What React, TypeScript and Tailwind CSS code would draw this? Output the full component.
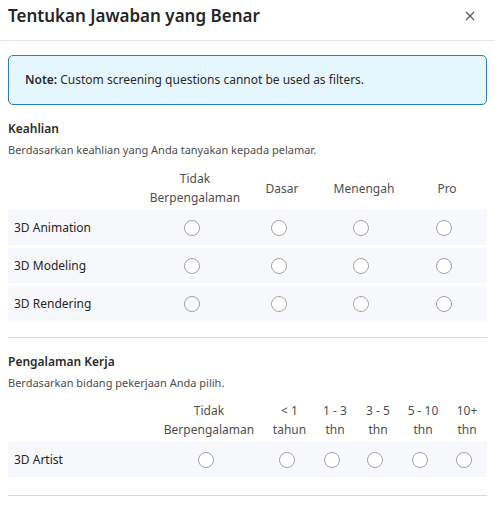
import React from "react";

const font = { fontFamily: '"Noto Sans", "Open Sans", sans-serif' };

function Radio() {
  return <span className="block w-4 h-4 rounded-full border border-[#a3a3a3] bg-white mr-[6px]" />;
}

function Section({
  title,
  subtitle,
  cols,
  template,
  rows,
  headerMt,
  pb,
}: {
  title: string;
  subtitle: string;
  cols: string[][];
  template: string;
  rows: string[];
  headerMt: string;
  pb: string;
}) {
  return (
    <div className={`border-b border-[#d9d9d9] mt-4 ${pb}`}>
      <div className="text-[12px] leading-4 font-semibold text-[#2b2b2b]">{title}</div>
      <div className="mt-[5px] text-[11px] leading-[15px] text-[#4d4d4d]">{subtitle}</div>
      <div className={`grid ${template} ${headerMt}`}>
        <div />
        {cols.map((c, i) => (
          <div
            key={i}
            className="flex flex-col items-center justify-center text-center text-[12px] leading-[19px] text-[#4f4f4f] h-[38px]"
          >
            {c.map((l, j) => (
              <span key={j} className="whitespace-nowrap">{l}</span>
            ))}
          </div>
        ))}
      </div>
      <div className="flex flex-col gap-[3px] mt-[3px]">
        {rows.map((r) => (
          <div key={r} className={`grid ${template} h-[35px] bg-[#f7f8fc] items-center`}>
            <div className="pl-[6px] text-[12px] text-[#262626]">{r}</div>
            {cols.map((_, i) => (
              <div key={i} className="flex justify-center">
                <Radio />
              </div>
            ))}
          </div>
        ))}
      </div>
    </div>
  );
}

export default function App() {
  return (
    <div className="w-[495px] h-[511px] bg-white overflow-hidden" style={font}>
      <div className="h-[41px] border-b border-[#e9e9e9] px-2 pt-[4px] flex justify-between">
        <div className="text-[17px] leading-[23px] font-semibold text-[#262626]">Tentukan Jawaban yang Benar</div>
        <svg width="10" height="10" viewBox="0 0 10 10" className="mt-[7px] mr-[12px]">
          <path d="M1 1L9 9M9 1L1 9" stroke="#595959" strokeWidth="1.3" />
        </svg>
      </div>
      <div className="px-2">
        <div className="mt-[14px] rounded-[5px] border border-[#2b7db8] bg-[#e6f6fd] px-4 py-4 text-[12px] leading-4 text-[#2b2b2b]">
          <span className="font-semibold">Note:</span> Custom screening questions cannot be used as filters.
        </div>
        <Section
          title="Keahlian"
          subtitle="Berdasarkan keahlian yang Anda tanyakan kepada pelamar."
          cols={[["Tidak", "Berpengalaman"], ["Dasar"], ["Menengah"], ["Pro"]]}
          template="grid-cols-[140px_94px_80px_84px_82px]"
          rows={["3D Animation", "3D Modeling", "3D Rendering"]}
          headerMt="mt-[12px]"
          pb="pb-4"
        />
        <Section
          title="Pengalaman Kerja"
          subtitle="Berdasarkan bidang pekerjaan Anda pilih."
          cols={[["Tidak", "Berpengalaman"], ["< 1", "tahun"], ["1 - 3", "thn"], ["3 - 5", "thn"], ["5 - 10", "thn"], ["10+", "thn"]]}
          template="grid-cols-[145px_112px_49px_42px_44px_46px_42px]"
          rows={["3D Artist"]}
          headerMt="mt-[11px]"
          pb="pb-[18px]"
        />
      </div>
    </div>
  );
}
